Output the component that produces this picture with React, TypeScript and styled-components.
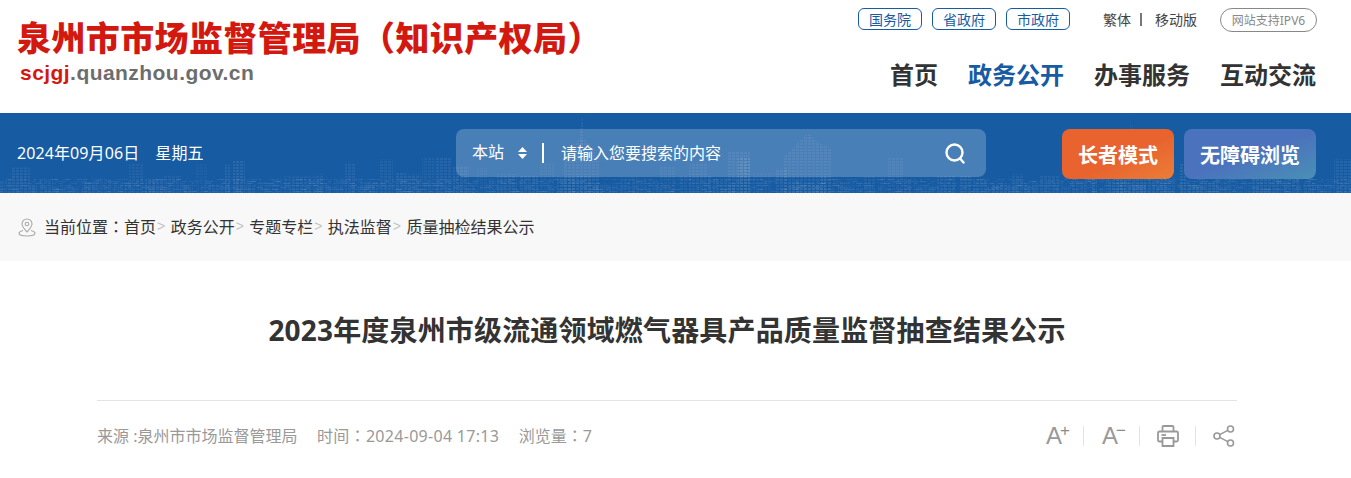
import React from 'react';
import styled, { createGlobalStyle } from 'styled-components';

const GlobalStyle = createGlobalStyle`
  html, body {
    margin: 0;
    padding: 0;
    background: #fff;
    overflow: hidden;
  }
  body {
    font-family: 'Noto Sans', 'Noto Sans CJK SC', sans-serif;
  }
`;

const Page = styled.div`
  width: 1351px;
  height: 478px;
  overflow: hidden;
`;

const Header = styled.header`
  height: 113px;
  display: flex;
  justify-content: space-between;
  padding: 0 34px 0 17px;
  box-sizing: border-box;
`;

const Logo = styled.div`
  padding-top: 14px;
`;

const LogoTitle = styled.div`
  font-family: 'Noto Sans CJK SC', sans-serif;
  font-size: 34px;
  line-height: 46px;
  font-weight: 900;
  color: #d3190f;
  white-space: nowrap;
  letter-spacing: 0.4px;
`;

const LogoUrl = styled.div`
  font-family: 'Liberation Sans', sans-serif;
  font-size: 21px;
  line-height: 26px;
  font-weight: 700;
  color: #6d6d6d;
  padding-left: 3px;
  letter-spacing: 0.45px;
  span {
    color: #d3190f;
  }
`;

const HeaderRight = styled.div`
  display: flex;
  flex-direction: column;
  align-items: flex-end;
  padding-top: 8px;
`;

const TopRow = styled.div`
  display: flex;
  align-items: flex-start;
  height: 24px;
`;

const SiteLink = styled.a`
  width: 64px;
  height: 22px;
  margin-right: 10px;
  border: 1px solid #175ba3;
  border-radius: 6px;
  box-sizing: border-box;
  display: flex;
  align-items: center;
  justify-content: center;
  font-size: 14px;
  color: #175ba3;
`;

const LangGroup = styled.div`
  display: flex;
  align-items: center;
  height: 22px;
  margin-left: 23px;
  font-size: 14px;
  color: #444;
`;

const LangDivider = styled.i`
  width: 2px;
  height: 13px;
  margin: 0 13px 0 9px;
  background: #777;
`;

const Ipv6 = styled.div`
  width: 97px;
  height: 24px;
  margin-left: 23px;
  border: 1px solid #888;
  border-radius: 12px;
  box-sizing: border-box;
  display: flex;
  align-items: center;
  justify-content: center;
  font-size: 12px;
  color: #888;
`;

const Nav = styled.nav`
  display: flex;
  gap: 30px;
  margin-top: 24px;
  margin-right: 1px;
`;

const NavItem = styled.a<{ $active?: boolean }>`
  font-family: 'Noto Sans CJK SC', sans-serif;
  font-size: 24px;
  line-height: 36px;
  font-weight: 700;
  color: ${(p) => (p.$active ? '#175ba3' : '#333')};
`;

const Band = styled.section`
  position: relative;
  height: 80px;
  background: #175ba3;
  overflow: hidden;
`;

const SkylineSvg = styled.svg`
  position: absolute;
  left: 0;
  bottom: 0;
`;

const BandInner = styled.div`
  position: relative;
  height: 100%;
  display: flex;
  align-items: flex-start;
  padding: 16px 35px 0 17px;
  box-sizing: border-box;
`;

const DateText = styled.div`
  width: 439px;
  height: 48px;
  padding-bottom: 3px;
  box-sizing: border-box;
  display: flex;
  align-items: center;
  gap: 16px;
  font-size: 16px;
  letter-spacing: 0.1px;
  color: #fff;
`;

const SearchBox = styled.div`
  width: 530px;
  height: 48px;
  padding: 0 21px 0 16px;
  box-sizing: border-box;
  display: flex;
  align-items: center;
  border-radius: 8px;
  background: rgba(255, 255, 255, 0.22);
  color: #fff;
  font-size: 16px;
`;

const Scope = styled.div`
  display: flex;
  align-items: center;
  gap: 14px;
  padding-right: 15px;
  margin-right: 17px;
  height: 20px;
  border-right: 2px solid #fff;
  line-height: 20px;
`;

const ScopeLabel = styled.span`
  position: relative;
  top: -1px;
`;

const Arrows = styled.svg`
  display: block;
`;

const Placeholder = styled.div`
  flex: 1;
  margin-top: -2px;
`;

const ModeButton = styled.a<{ $variant: 'elder' | 'access' }>`
  height: 50px;
  border-radius: 8px;
  display: flex;
  align-items: center;
  justify-content: center;
  font-size: 20px;
  font-weight: 700;
  color: #fff;
  font-family: 'Noto Sans CJK SC', sans-serif;
  width: ${(p) => (p.$variant === 'elder' ? '112px' : '132px')};
  margin-left: ${(p) => (p.$variant === 'elder' ? '76px' : '10px')};
  background: ${(p) =>
    p.$variant === 'elder'
      ? 'linear-gradient(155deg, #e8632e 55%, #ec7d38 100%)'
      : 'linear-gradient(160deg, #4b72bd 50%, #4a90b5 100%)'};
`;

const Crumbs = styled.div`
  height: 68px;
  background: #f8f8f8;
  display: flex;
  align-items: center;
  padding: 0 0 3px 18px;
  box-sizing: border-box;
  font-size: 16px;
  color: #333;
`;

const CrumbIcon = styled.svg`
  margin: 3px 8px 0 0;
`;

const CrumbSep = styled.span`
  color: #c4c4c4;
  font-family: 'Liberation Sans', sans-serif;
  font-size: 14px;
  margin: 0 5.4px 0 1px;
`;

// the reference sets its full-width colons centred in the em box
const Colon = styled.span`
  font-family: 'Noto Sans CJK TC', sans-serif;
`;

const Article = styled.main`
  width: 1140px;
  margin: 0 0 0 97px;
`;

const Title = styled.h1`
  margin: 0;
  padding: 48px 0 0;
  height: 140px;
  box-sizing: border-box;
  border-bottom: 1px solid #e3e3e3;
  text-align: center;
  font-size: 28px;
  line-height: 42px;
  font-weight: 700;
  letter-spacing: 0.17px;
  color: #333;
  font-family: 'Noto Sans', 'Noto Sans CJK SC', sans-serif;
`;

const MetaRow = styled.div`
  height: 70px;
  display: flex;
  align-items: center;
  justify-content: space-between;
  font-size: 16px;
  color: #999;
`;

const MetaGroup = styled.div`
  display: flex;
  gap: 19.5px;
  margin-top: -3px;
`;

const TimeValue = styled.span`
  letter-spacing: 0.3px;
`;

const Tools = styled.div`
  display: flex;
  align-items: center;
  margin-right: -15px;
`;

const ToolCell = styled.button`
  width: 56px;
  height: 20px;
  padding: 0;
  border: 0;
  background: none;
  display: flex;
  align-items: center;
  justify-content: center;
  color: #999;
  font-family: 'Liberation Sans', sans-serif;
  font-size: 24px;
  line-height: 20px;
  border-right: 1px solid #e3e3e3;
  &:last-child {
    border-right: 0;
  }
`;

const ToolMark = styled.span`
  font-size: 17px;
  line-height: 1;
  margin: 0 -5px 0 -2px;
  position: relative;
  top: -6px;
  color: #8c8c8c;
`;

// the skyline in the band: a seeded row of striped blocks plus a few landmark towers
const seeded = (start: number) => {
  let seed = start;
  return () => {
    seed = (seed * 16807) % 2147483647;
    return seed / 2147483647;
  };
};

const blocks = (() => {
  const rnd = seeded(23);
  const out: { x: number; w: number; h: number; o: number }[] = [];
  let x = 0;
  while (x < 1351) {
    const w = 5 + Math.floor(rnd() * 16);
    const tall = rnd() > 0.8;
    out.push({ x, w, h: tall ? 24 + rnd() * 12 : 6 + rnd() * 14, o: 0.03 + rnd() * 0.05 });
    x += w + Math.floor(rnd() * 4);
  }
  return out;
})();

const grain = (() => {
  const rnd = seeded(91);
  const out: { x: number; y: number; w: number; o: number }[] = [];
  for (let y = 66; y < 80; y += 2) {
    for (let x = 0; x < 1351; x += 3 + Math.floor(rnd() * 5)) {
      if (rnd() > 0.45) out.push({ x, y, w: 2 + Math.floor(rnd() * 6), o: 0.03 + rnd() * 0.08 });
    }
  }
  return out;
})();

const towers = [
  'M580 40 L580 18 L582 3 L584 18 L584 40 Z',
  'M564 80 L564 50 Q570 30 582 26 Q594 30 600 50 L600 80 Z',
  'M728 80 L728 38 L750 38 L750 80 Z',
  'M784 80 L784 44 L798 30 L808 20 L818 30 L832 36 L832 80 Z',
  'M1126 40 L1130 20 L1131 2 L1133 20 L1137 40 Z',
  'M1118 80 L1118 42 L1146 42 L1146 80 Z',
];

const Skyline = () => (
  <SkylineSvg width="1351" height="80" viewBox="0 0 1351 80" aria-hidden>
    <defs>
      <pattern id="floors" width="4" height="3" patternUnits="userSpaceOnUse">
        <rect width="3" height="2" fill="#fff" />
      </pattern>
    </defs>
    {blocks.map((b, i) => (
      <rect key={i} x={b.x} y={80 - b.h} width={b.w} height={b.h} fill="url(#floors)" opacity={b.o} />
    ))}
    {towers.map((d) => (
      <path key={d} d={d} fill="url(#floors)" opacity="0.06" />
    ))}
    {grain.map((g, i) => (
      <rect key={i} x={g.x} y={g.y} width={g.w} height="1" fill="#fff" opacity={g.o} />
    ))}
  </SkylineSvg>
);

export default function App() {
  return (
    <Page>
      <GlobalStyle />
      <Header>
        <Logo>
          <LogoTitle>泉州市市场监督管理局（知识产权局）</LogoTitle>
          <LogoUrl>
            <span>scjgj</span>.quanzhou.gov.cn
          </LogoUrl>
        </Logo>
        <HeaderRight>
          <TopRow>
            <SiteLink>国务院</SiteLink>
            <SiteLink>省政府</SiteLink>
            <SiteLink>市政府</SiteLink>
            <LangGroup>
              繁体
              <LangDivider />
              移动版
            </LangGroup>
            <Ipv6>网站支持IPV6</Ipv6>
          </TopRow>
          <Nav>
            <NavItem>首页</NavItem>
            <NavItem $active>政务公开</NavItem>
            <NavItem>办事服务</NavItem>
            <NavItem>互动交流</NavItem>
          </Nav>
        </HeaderRight>
      </Header>
      <Band>
        <Skyline />
        <BandInner>
          <DateText>
            <span>2024年09月06日</span>
            <span>星期五</span>
          </DateText>
          <SearchBox>
            <Scope>
              <ScopeLabel>本站</ScopeLabel>
              <Arrows width="9" height="12" viewBox="0 0 9 12">
                <path d="M4.5 0 L9 5 H0 Z M0 7 H9 L4.5 12 Z" fill="#fff" />
              </Arrows>
            </Scope>
            <Placeholder>请输入您要搜索的内容</Placeholder>
            <svg width="20" height="21" viewBox="0 0 20 21" fill="none" stroke="#fff" strokeWidth="2.4" strokeLinecap="round">
              <circle cx="9.5" cy="9.5" r="8" />
              <path d="M15.5 16 L18.5 19.5" />
            </svg>
          </SearchBox>
          <ModeButton $variant="elder">长者模式</ModeButton>
          <ModeButton $variant="access">无障碍浏览</ModeButton>
        </BandInner>
      </Band>
      <Crumbs>
        <CrumbIcon width="18" height="19" viewBox="0 0 18 19" fill="none" stroke="#a8a8a8" strokeWidth="1.1">
          <path d="M9 14 C6 10.5 4 8.5 4 6 A5 5 0 0 1 14 6 C14 8.5 12 10.5 9 14 Z" />
          <circle cx="9" cy="6" r="1.8" />
          <path d="M5 12.5 C2.5 13.2 1 14.2 1 15.3 C1 17 4.6 18 9 18 C13.4 18 17 17 17 15.3 C17 14.2 15.5 13.2 13 12.5" />
        </CrumbIcon>
        当前位置<Colon>：</Colon>首页<CrumbSep>&gt;</CrumbSep>政务公开<CrumbSep>&gt;</CrumbSep>专题专栏<CrumbSep>&gt;</CrumbSep>执法监督<CrumbSep>&gt;</CrumbSep>质量抽检结果公示
      </Crumbs>
      <Article>
        <Title>2023年度泉州市级流通领域燃气器具产品质量监督抽查结果公示</Title>
        <MetaRow>
          <MetaGroup>
            <span>来源 :泉州市市场监督管理局</span>
            <TimeValue>时间<Colon>：</Colon>2024-09-04 17:13</TimeValue>
            <span>浏览量<Colon>：</Colon>7</span>
          </MetaGroup>
          <Tools>
            <ToolCell>
              A<ToolMark>+</ToolMark>
            </ToolCell>
            <ToolCell>
              A<ToolMark>−</ToolMark>
            </ToolCell>
            <ToolCell>
              <svg width="22" height="22" viewBox="0 0 22 22" fill="none" stroke="#999" strokeWidth="1.8">
                <path d="M5.5 6.5 V2 Q5.5 1 6.5 1 H15.5 Q16.5 1 16.5 2 V6.5" />
                <path d="M5.5 16.5 H2.5 Q1 16.5 1 15 V8 Q1 6.5 2.5 6.5 H19.5 Q21 6.5 21 8 V15 Q21 16.5 19.5 16.5 H16.5" />
                <path d="M5.5 13 H16.5 V21 H5.5 Z" />
                <path d="M4.5 10 H9" />
              </svg>
            </ToolCell>
            <ToolCell>
              <svg width="22" height="22" viewBox="0 0 22 22" fill="none" stroke="#999" strokeWidth="1.6">
                <circle cx="4" cy="11" r="3" />
                <circle cx="17.5" cy="4" r="3" />
                <circle cx="17.5" cy="18" r="3" />
                <path d="M6.7 9.6 L14.8 5.4 M6.7 12.4 L14.8 16.6" />
              </svg>
            </ToolCell>
          </Tools>
        </MetaRow>
      </Article>
    </Page>
  );
}
